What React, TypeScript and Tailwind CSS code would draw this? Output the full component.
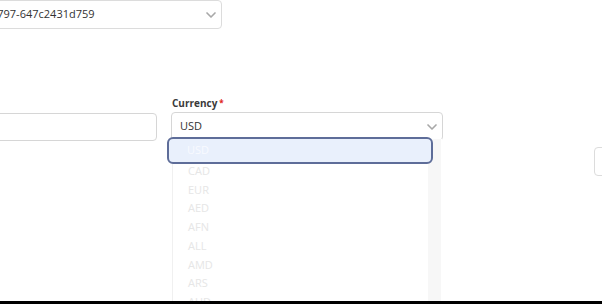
import React from "react";
import { ChevronDown } from "lucide-react";

const options = ["CAD", "EUR", "AED", "AFN", "ALL", "AMD", "ARS", "AUD"];

export default function App() {
  return (
    <div
      className="relative w-[602px] h-[304px] overflow-hidden bg-white border-b-[3px] border-black"
      style={{ fontFamily: "'Open Sans', 'Segoe UI', sans-serif" }}
    >
      {/* top select */}
      <div className="ml-[-70px] w-[292px] h-[29px] border border-[#dcdcdc] rounded-[4px] flex items-center justify-between pl-[31px] pr-[2px] text-[11px] text-[#333]">
        <span className="whitespace-nowrap">a1b2-4797-647c2431d759</span>
        <ChevronDown className="w-[16px] h-[16px] text-[#a8a8a8]" strokeWidth={2.5} />
      </div>

      {/* second row */}
      <div className="mt-[68px] flex items-end gap-[14px]">
        <div className="ml-[-40px] w-[197px] h-[28px] border border-[#d6d6d6] rounded-[4px]" />
        <div className="relative flex flex-col">
          <div className="text-[10px] font-bold text-[#3a3a3a] leading-[12px] mb-[3px] ml-[1px]">
            Currency<span className="text-[#e02020] text-[8px] align-top ml-[2px]">*</span>
          </div>
          <div className="w-[272px] h-[29px] border border-[#d6d6d6] rounded-[4px] flex items-center justify-between pl-[8px] pr-[2px] text-[11px] text-[#333]">
            <span>USD</span>
            <ChevronDown className="w-[16px] h-[16px] text-[#a8a8a8]" strokeWidth={2.5} />
          </div>

          {/* dropdown */}
          <div className="absolute left-[1px] top-[42px] w-[270px] h-[200px] bg-white border-l border-[#f0f0f0] flex">
            <div className="flex-1 flex flex-col pt-[23px]">
              {options.map((o) => (
                <div key={o} className="h-[18.7px] pl-[15px] text-[11px] text-[#e6e6e6] flex items-center">
                  {o}
                </div>
              ))}
            </div>
            <div className="w-[13px] mr-[1px] bg-[#f7f7f7]" />
          </div>
          <div className="absolute left-[-4px] top-[40px] w-[266px] h-[27px] bg-[#e9f0fc] border-2 border-[#5e6d99] rounded-[6px] flex items-center pl-[18px] text-[11px] text-[#f8faff]">
            USD
          </div>
        </div>
      </div>

      {/* right clipped element */}
      <div className="absolute left-[594px] top-[147px] w-[30px] h-[29px] border border-[#dcdcdc] rounded-[4px]" />
    </div>
  );
}
